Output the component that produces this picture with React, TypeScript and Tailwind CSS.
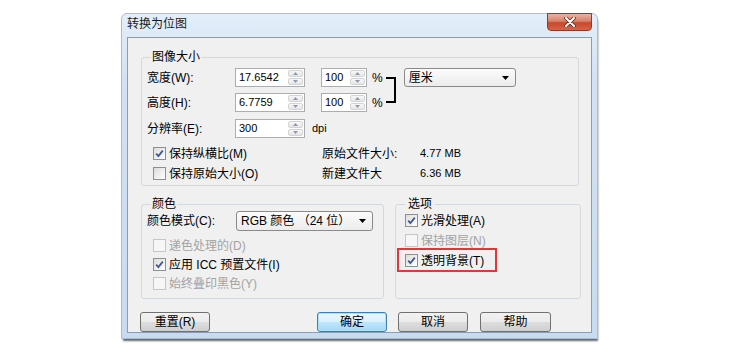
import React from "react";

const btnBg =
  "bg-[linear-gradient(#f2f2f2_0%,#ebebeb_50%,#dddddd_51%,#cfcfcf_100%)]";

function Tri({ up = false, color = "#6b7a8f" }: { up?: boolean; color?: string }) {
  return (
    <svg width="5" height="3" viewBox="0 0 5 3">
      <path d={up ? "M0 3 L2.5 0 L5 3 Z" : "M0 0 L2.5 3 L5 0 Z"} fill={color} />
    </svg>
  );
}

function Spin() {
  return (
    <div className="flex flex-col w-[17px] h-full p-px gap-px">
      <div className="flex-1 flex items-center justify-center rounded-[2px] border border-[#d4d4d4] bg-[linear-gradient(#f7f7f7,#e6e6e6)]">
        <Tri up color="#8a9bb3" />
      </div>
      <div className="flex-1 flex items-center justify-center rounded-[2px] border border-[#d4d4d4] bg-[linear-gradient(#f7f7f7,#e6e6e6)]">
        <Tri color="#8a9bb3" />
      </div>
    </div>
  );
}

function NumBox({ value, width }: { value: string; width: string }) {
  return (
    <div className={`flex h-[19px] ${width} border border-[#abadb3] bg-white`}>
      <span className="flex-1 pl-[3px] text-[11px] leading-[17px]">{value}</span>
      <Spin />
    </div>
  );
}

function Check({ checked = false, disabled = false }: { checked?: boolean; disabled?: boolean }) {
  return (
    <span
      className={`flex items-center justify-center w-[13px] h-[13px] shrink-0 border ${
        disabled
          ? "border-[#c6c6c6] bg-[#f6f6f6]"
          : "border-[#8e8f8f] bg-[linear-gradient(135deg,#dcdcdc,#ffffff)]"
      }`}
    >
      {checked && (
        <svg width="9" height="9" viewBox="0 0 9 9">
          <path d="M1.2 4.6 L3.4 7 L7.8 1.6" fill="none" stroke="#3f5a92" strokeWidth="1.8" />
        </svg>
      )}
    </span>
  );
}

function CheckRow({
  label,
  checked,
  disabled,
  className = "",
}: {
  label: string;
  checked?: boolean;
  disabled?: boolean;
  className?: string;
}) {
  return (
    <div className={`flex items-center h-[17px] gap-[3px] ${className}`}>
      <Check checked={checked} disabled={disabled} />
      <span className={`whitespace-nowrap leading-none ${disabled ? "text-[#a3a3a3]" : ""}`}>{label}</span>
    </div>
  );
}

function Combo({ text, width, height }: { text: string; width: string; height: string }) {
  return (
    <div
      className={`flex items-center ${width} ${height} pl-[4px] pr-[6px] rounded-[3px] border border-[#8a8a8a] bg-[linear-gradient(#fbfbfb,#ececec)]`}
    >
      <span className="flex-1 whitespace-nowrap leading-none">{text}</span>
      <svg width="7" height="4" viewBox="0 0 7 4">
        <path d="M0 0 L3.5 4 L7 0 Z" fill="#000" />
      </svg>
    </div>
  );
}

function Btn({ label, width = "w-[71px]", primary = false }: { label: string; width?: string; primary?: boolean }) {
  return (
    <div
      className={`flex items-center justify-center h-[20px] ${width} rounded-[3px] border ${
        primary
          ? "border-[#3c7fb1] shadow-[inset_0_0_0_1px_#a8e2f7] bg-[linear-gradient(#eaf6fd_0%,#d9f0fc_50%,#bee6fd_51%,#a7d9f5_100%)]"
          : `border-[#707070] ${btnBg}`
      }`}
    >
      <span className="leading-none">{label}</span>
    </div>
  );
}

export default function App() {
  return (
    <div className="w-[745px] h-[361px] bg-white overflow-hidden pt-[13px] text-[12px] text-black font-['Liberation_Sans','Noto_Sans_CJK_SC',sans-serif]">
      {/* window frame */}
      <div className="ml-[121px] w-[477px] rounded-t-[6px] border border-[#a9bcd1] bg-[linear-gradient(#e4eefa,#d2e2f4_20%,#c8dbf0)] px-[5px] pb-[5px] shadow-[1px_3px_2px_-1px_rgba(0,0,0,0.6)]">
        {/* title bar */}
        <div className="flex h-[23px]">
          <span className="flex-1 pt-[4px] leading-none text-[#1a1a1a]">转换为位图</span>
          <div className="-mt-px w-[45px] h-[18px] flex items-center justify-center rounded-b-[4px] border border-[#8d3a2c] bg-[linear-gradient(#eab3a4_0%,#d98168_45%,#c9482c_55%,#d4664a_100%)]">
            <svg width="12" height="10" viewBox="0 0 12 10">
              <path d="M2 1 L10 9 M10 1 L2 9" stroke="#5b2a22" strokeWidth="3.6" strokeLinecap="round" />
              <path d="M2 1 L10 9 M10 1 L2 9" stroke="#ffffff" strokeWidth="2" strokeLinecap="round" />
            </svg>
          </div>
        </div>

        {/* client area */}
        <div className="h-[296px] border border-[#8b9db3] bg-[#f0f0f0] pl-[13px]">
          {/* 图像大小 */}
          <fieldset className="mt-[12px] w-[438px] h-[136px] border border-[#d3d9df] rounded-[3px] pl-[5px] pt-[4px]">
            <legend className="ml-[4px] px-px leading-[14px]">图像大小</legend>
            <div className="flex">
              <div className="flex flex-col gap-[6px]">
                <div className="flex items-center h-[19px]">
                  <span className="w-[88px] leading-none">宽度(W):</span>
                  <NumBox value="17.6542" width="w-[70px]" />
                  <div className="ml-[16px]">
                    <NumBox value="100" width="w-[46px]" />
                  </div>
                  <span className="ml-[5px] leading-none">%</span>
                </div>
                <div className="flex items-center h-[19px]">
                  <span className="w-[88px] leading-none">高度(H):</span>
                  <NumBox value="6.7759" width="w-[70px]" />
                  <div className="ml-[16px]">
                    <NumBox value="100" width="w-[46px]" />
                  </div>
                  <span className="ml-[5px] leading-none">%</span>
                </div>
              </div>
              <div className="ml-[3px] mt-[9px] w-[10px] h-[26px] border-t-2 border-r-2 border-b-2 border-black" />
              <div className="ml-[8px]">
                <Combo text="厘米" width="w-[112px]" height="h-[19px]" />
              </div>
            </div>
            <div className="flex items-center h-[19px] mt-[7px]">
              <span className="w-[88px] leading-none">分辨率(E):</span>
              <NumBox value="300" width="w-[70px]" />
              <span className="ml-[7px] leading-none text-[11px]">dpi</span>
            </div>
            <div className="flex items-center mt-[7px]">
              <CheckRow label="保持纵横比(M)" checked className="w-[175px] pl-[6px]" />
              <span className="w-[98px] leading-none">原始文件大小:</span>
              <span className="text-[11px] leading-none">4.77 MB</span>
            </div>
            <div className="flex items-center mt-[3px]">
              <CheckRow label="保持原始大小(O)" className="w-[175px] pl-[6px]" />
              <span className="w-[98px] leading-none">新建文件大</span>
              <span className="text-[11px] leading-none">6.36 MB</span>
            </div>
          </fieldset>

          <div className="flex mt-[11px]">
            {/* 颜色 */}
            <fieldset className="w-[243px] h-[102px] border border-[#d3d9df] rounded-[3px] pl-[5px]">
              <legend className="ml-[4px] px-px leading-[14px]">颜色</legend>
              <div className="flex items-center h-[20px]">
                <span className="w-[89px] leading-none">颜色模式(C):</span>
                <Combo text="RGB 颜色 （24 位）" width="w-[137px]" height="h-[20px]" />
              </div>
              <CheckRow label="递色处理的(D)" disabled className="mt-[6px] pl-[6px]" />
              <CheckRow label="应用 ICC 预置文件(I)" checked className="mt-[2px] pl-[6px]" />
              <CheckRow label="始终叠印黑色(Y)" disabled className="mt-[2px] pl-[6px]" />
            </fieldset>

            {/* 选项 */}
            <fieldset className="ml-[11px] w-[186px] h-[102px] border border-[#d3d9df] rounded-[3px] pl-[5px]">
              <legend className="ml-[4px] px-[3px] leading-[14px]">选项</legend>
              <CheckRow label="光滑处理(A)" checked className="mt-px pl-[4px]" />
              <CheckRow label="保持图层(N)" disabled className="mt-[3px] pl-[4px]" />
              <div className="relative mt-[3px]">
                <CheckRow label="透明背景(T)" checked className="pl-[4px]" />
                <span className="absolute left-[-4px] top-[-4px] w-[100px] h-[24px] border-2 border-[#e3363a]" />
              </div>
            </fieldset>
          </div>

          {/* buttons */}
          <div className="flex mt-[13px] ml-[-1px]">
            <Btn label="重置(R)" width="w-[70px]" />
            <div className="ml-[107px]">
              <Btn label="确定" width="w-[70px]" primary />
            </div>
            <div className="ml-[11px]">
              <Btn label="取消" width="w-[70px]" />
            </div>
            <div className="ml-[12px]">
              <Btn label="帮助" width="w-[71px]" />
            </div>
          </div>
        </div>
      </div>
    </div>
  );
}
